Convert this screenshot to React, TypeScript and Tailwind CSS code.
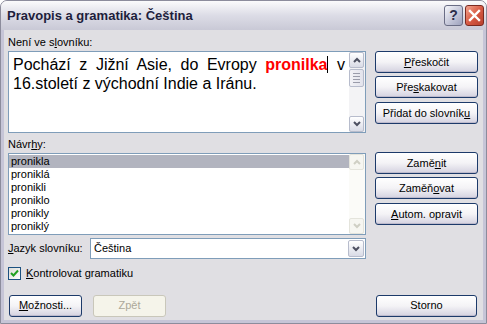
import type { ReactNode } from 'react'

const ui = { fontFamily: '"Liberation Sans", Arial, sans-serif' }

function Btn({ children, disabled, className = '' }: { children: ReactNode; disabled?: boolean; className?: string }) {
  return (
    <div
      className={`flex h-[22px] items-center justify-center rounded-[3px] border text-[11px] ${
        disabled
          ? 'border-[#c9c7ba] bg-[#f5f4ea] text-[#aca899]'
          : 'border-[#1c3a6a] bg-gradient-to-b from-white via-[#f4f3f6] to-[#d4d2e0] text-black shadow-[inset_0_-1px_0_#bdbacc]'
      } ${className}`}
    >
      {children}
    </div>
  )
}

function ArrowBtn({ dir, disabled }: { dir: 'up' | 'down'; disabled?: boolean }) {
  return (
    <div
      className={`flex h-[16px] w-[15px] items-center justify-center rounded-[2px] border ${
        disabled ? 'border-[#e4e4dc] bg-[#f6f6f1]' : 'border-[#b7bccc] bg-gradient-to-b from-white to-[#d9dbe6]'
      }`}
    >
      <svg width="8" height="6" viewBox="0 0 8 6">
        <path
          d={dir === 'up' ? 'M1 5 L4 2 L7 5' : 'M1 1 L4 4 L7 1'}
          fill="none"
          stroke={disabled ? '#cfcfc4' : '#4d5061'}
          strokeWidth="2"
        />
      </svg>
    </div>
  )
}

function Scrollbar({ disabled, thumb }: { disabled?: boolean; thumb?: boolean }) {
  return (
    <div className={`flex w-[16px] flex-col justify-between ${disabled ? 'bg-[#fbfbf8]' : 'bg-[#f3f3f5]'}`}>
      <div>
        <ArrowBtn dir="up" disabled={disabled} />
        {thumb && (
          <div className="mt-[1px] flex h-[18px] w-[15px] flex-col items-center justify-center gap-[2px] rounded-[2px] border border-[#b7bccc] bg-gradient-to-r from-[#f2f2f6] to-[#e2e3ec]">
            <div className="h-px w-[7px] bg-[#9a9caa]" />
            <div className="h-px w-[7px] bg-[#9a9caa]" />
            <div className="h-px w-[7px] bg-[#9a9caa]" />
            <div className="h-px w-[7px] bg-[#9a9caa]" />
          </div>
        )}
      </div>
      <ArrowBtn dir="down" disabled={disabled} />
    </div>
  )
}

const suggestions = ['pronikla', 'proniklá', 'pronikli', 'proniklo', 'pronikly', 'proniklý']

export default function App() {
  return (
    <div className="h-[324px] w-[487px] bg-white" style={ui}>
      <div className="flex h-full w-full flex-col rounded-t-[7px] border border-[#8c8c9c] bg-[#e0dfe3]">
        {/* title bar */}
        <div className="flex h-[29px] items-center rounded-t-[6px] bg-gradient-to-b from-[#fbfbfc] via-[#dcdce6] to-[#c9c9d6] pl-[6px] pr-[2px]">
          <span className="flex-1 text-[13px] font-bold text-[#1e1e3c]">Pravopis a gramatika: Čeština</span>
          <div className="flex gap-[2px]">
            <div className="flex h-[21px] w-[19px] items-center justify-center rounded-[3px] border border-[#6a6d85] bg-gradient-to-br from-[#f6f7fb] via-[#c9cbdc] to-[#9ea2bd] text-[14px] font-bold text-[#2b2e4a]">
              ?
            </div>
            <div className="flex h-[21px] w-[19px] items-center justify-center rounded-[3px] border border-[#7a2a20] bg-gradient-to-br from-[#f2a48f] via-[#d85a44] to-[#b8402d]">
              <svg width="13" height="13" viewBox="0 0 13 13">
                <path d="M2 2 L11 11 M11 2 L2 11" stroke="white" strokeWidth="2.4" strokeLinecap="square" />
              </svg>
            </div>
          </div>
        </div>

        {/* body */}
        <div className="flex flex-1 flex-col border-x-[3px] border-b-[3px] border-[#c6c5d7] px-[4px]">
          <div className="flex gap-[9px]">
            <div className="flex w-[358px] flex-col">
              <div className="mt-[6px] h-[13px] text-[11px] leading-[13px]">
                Není ve s<u>l</u>ovníku:
              </div>
              <div className="mt-[2px] flex h-[82px] border border-[#7f9db9] bg-white">
                <div className="flex-1 pl-[4px] pr-[4px] pt-[1px] text-[16px] leading-[19px] text-black">
                  <div className="text-justify [text-align-last:justify]">
                    Pochází z Jižní Asie, do Evropy{' '}
                    <span className="font-bold text-[#ff0000]">pronilka</span>
                    <span className="relative inline-block h-[17px] w-px translate-y-[3px] bg-black" />{' '}v
                  </div>
                  <div>16.století z východní Indie a Iránu.</div>
                </div>
                <Scrollbar thumb />
              </div>

              <div className="mt-[5px] h-[13px] text-[11px] leading-[13px]">
                Návr<u>h</u>y:
              </div>
              <div className="mt-[2px] flex h-[82px] border border-[#7f9db9] bg-white">
                <div className="flex-1 pt-[1px]">
                  {suggestions.map((s, i) => (
                    <div
                      key={s}
                      className={`h-[13px] pl-[2px] text-[11px] leading-[13px] ${i === 0 ? 'bg-[#b2b4bf]' : ''}`}
                    >
                      {s}
                    </div>
                  ))}
                </div>
                <Scrollbar disabled />
              </div>

              <div className="mt-[3px] flex items-center">
                <span className="w-[82px] text-[11px]">
                  <u>J</u>azyk slovníku:
                </span>
                <div className="flex h-[21px] flex-1 items-center border border-[#7f9db9] bg-white p-[1px]">
                  <span className="flex-1 pl-[2px] text-[11px]">Čeština</span>
                  <div className="flex h-[17px] w-[16px] items-center justify-center rounded-[2px] border border-[#b7bccc] bg-gradient-to-b from-white to-[#d9dbe6]">
                    <svg width="8" height="6" viewBox="0 0 8 6">
                      <path d="M1 1 L4 4 L7 1" fill="none" stroke="#4d5061" strokeWidth="2" />
                    </svg>
                  </div>
                </div>
              </div>
            </div>

            <div className="flex w-[103px] flex-col pt-[21px]">
              <Btn>
                <u>P</u>řeskočit
              </Btn>
              <Btn className="mt-[3px]">
                Pře<u>s</u>kakovat
              </Btn>
              <Btn className="mt-[4px]">
                Přidat do slovník<u>u</u>
              </Btn>
              <Btn className="mt-[28px]">
                Zamě<u>n</u>it
              </Btn>
              <Btn className="mt-[3px]">
                Zaměň<u>o</u>vat
              </Btn>
              <Btn className="mt-[4px]">
                <u>A</u>utom. opravit
              </Btn>
            </div>
          </div>

          <div className="mt-[6px] flex items-center gap-[5px]">
            <div className="flex h-[13px] w-[13px] items-center justify-center border border-[#1c5180] bg-gradient-to-br from-[#dcdcd7] to-white">
              <svg width="9" height="9" viewBox="0 0 9 9">
                <path d="M1 4 L3.5 6.5 L8 1.5" fill="none" stroke="#21a121" strokeWidth="2" />
              </svg>
            </div>
            <span className="text-[11px]">
              <u>K</u>ontrolovat gramatiku
            </span>
          </div>

          <div className="mt-[13px] flex">
            <Btn className="ml-[1px] w-[73px]">
              <u>M</u>ožnosti...
            </Btn>
            <Btn disabled className="ml-[11px] w-[73px]">
              Zpět
            </Btn>
            <Btn className="ml-auto mr-[2px] w-[101px]">Storno</Btn>
          </div>
        </div>
      </div>
    </div>
  )
}
